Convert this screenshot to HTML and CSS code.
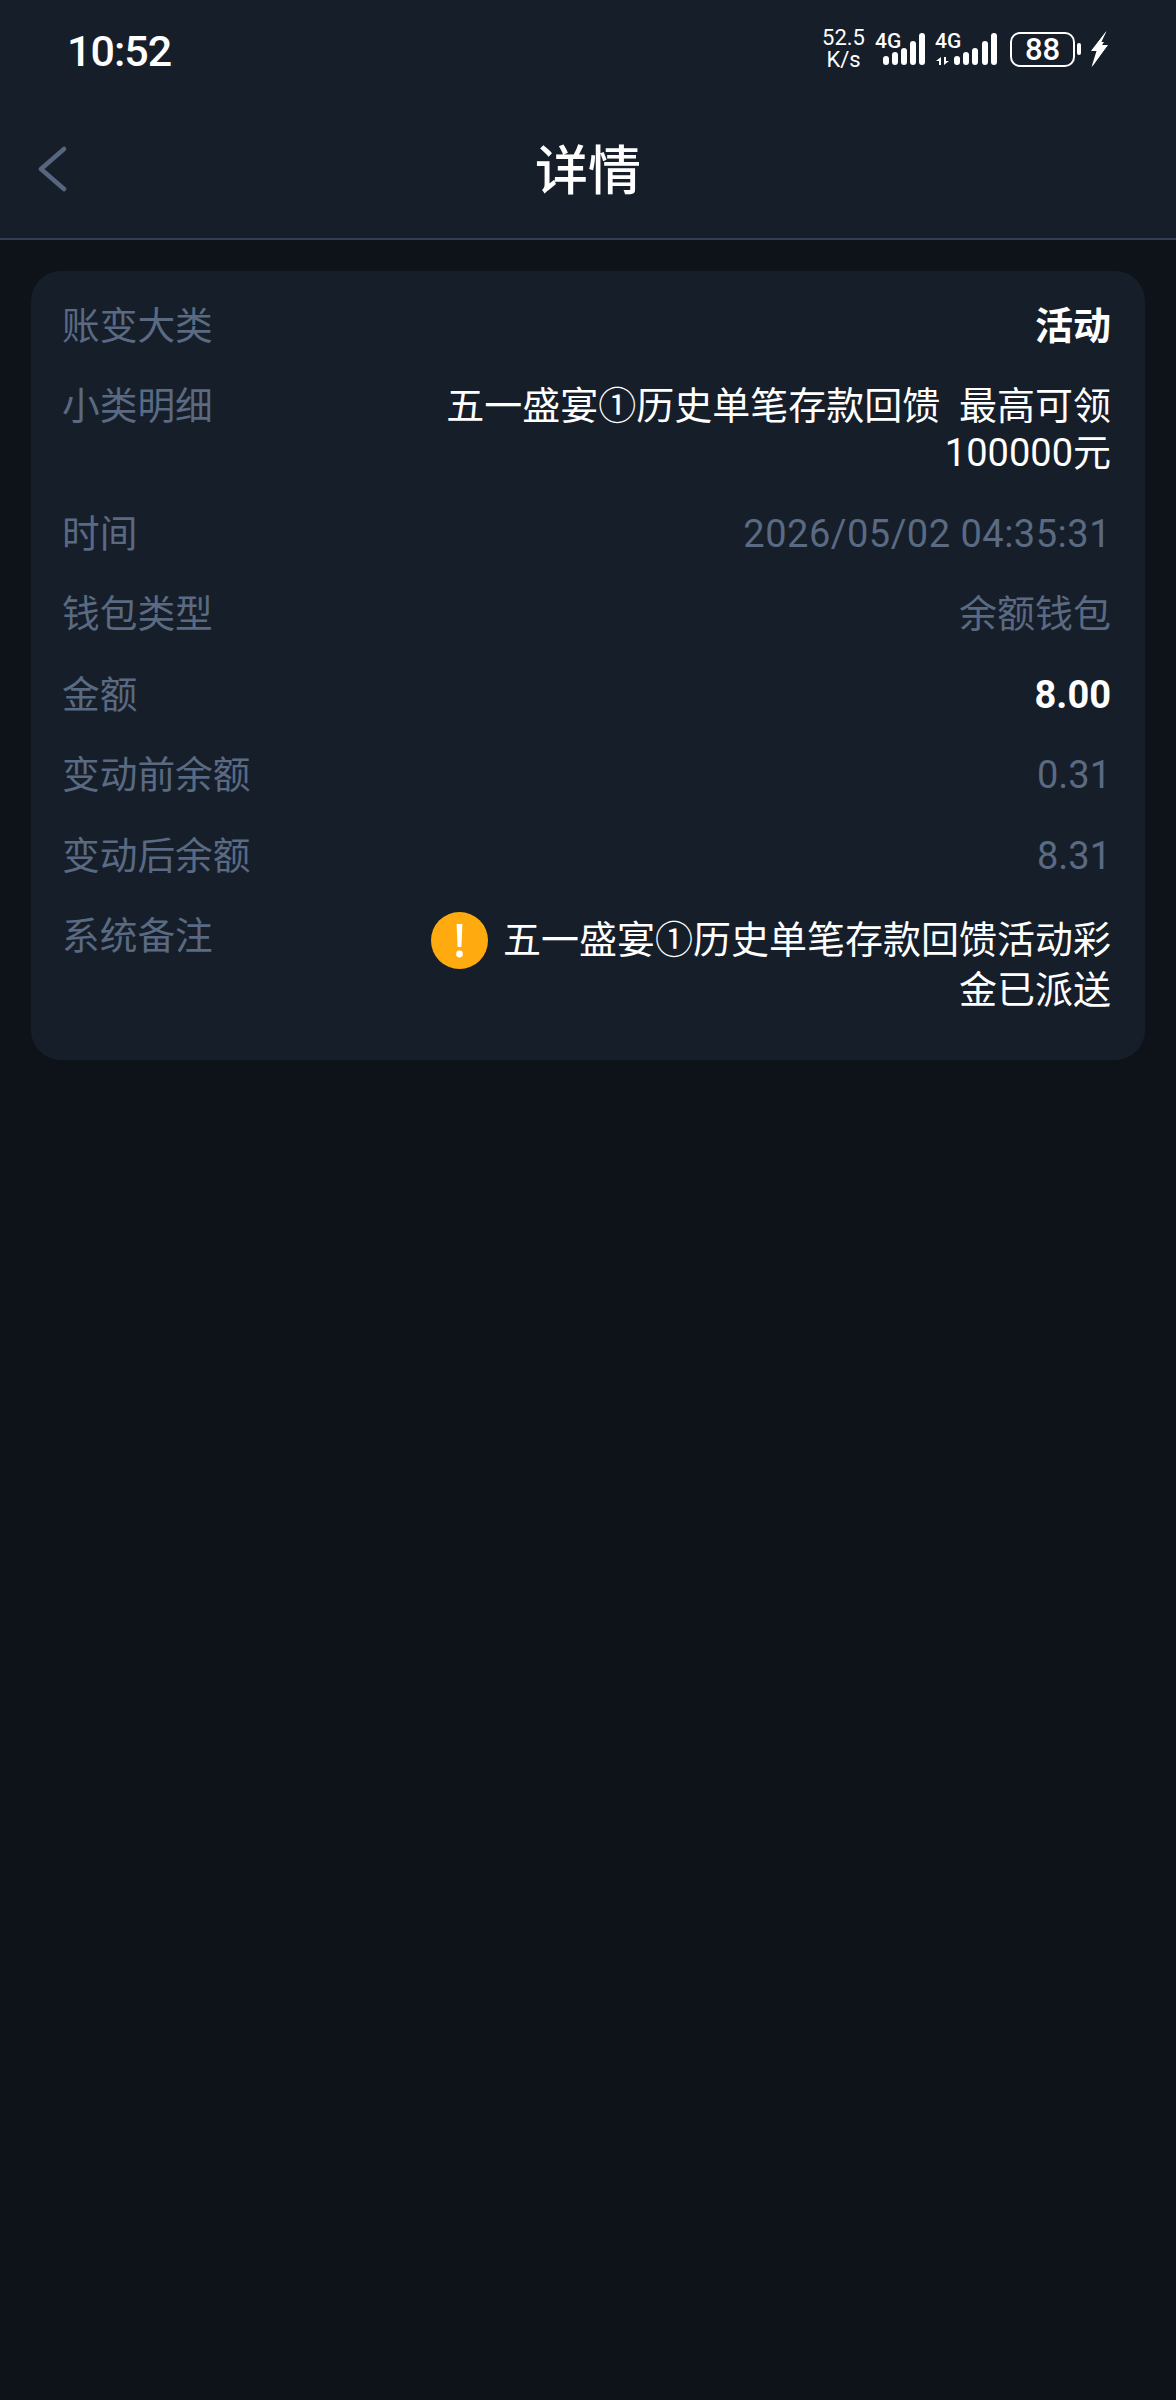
FILE: index.html
```html
<!DOCTYPE html>
<html>
<head>
	<title>详情</title>
	<link rel="stylesheet" href="styles.css">
</head>
<body>
	<header class="header">
		<div class="status-bar">
			<span class="clock">10:52</span>
			<div class="status-icons">
				<div class="net-speed">52.5<br>K/s</div>
				<svg class="signal" width="50" height="38" viewBox="0 -3 50 38">
					<text class="signal-text" x="0" y="15">4G</text>
					<rect x="8" y="23" width="6" height="9" rx="3"/>
					<rect x="17" y="19" width="6" height="13" rx="3"/>
					<rect x="26" y="15" width="6" height="17" rx="3"/>
					<rect x="35" y="8" width="6" height="24" rx="3"/>
					<rect x="44" y="0" width="6" height="32" rx="3"/>
				</svg>
				<svg class="signal" width="62" height="38" viewBox="0 -3 62 38">
					<text class="signal-text" x="0" y="15">4G</text>
					<path d="M6 24v8H4v-4H1zM9 24h2v4h3l-5 4z"/>
					<rect x="19" y="23" width="6" height="9" rx="3"/>
					<rect x="28" y="19" width="6" height="13" rx="3"/>
					<rect x="37" y="15" width="6" height="17" rx="3"/>
					<rect x="47" y="8" width="6" height="24" rx="3"/>
					<rect x="56" y="0" width="6" height="32" rx="3"/>
				</svg>
				<div class="battery">
					<div class="battery-body">88</div>
					<div class="battery-nub"></div>
				</div>
				<svg class="bolt" width="17" height="36" viewBox="0 0 17 36">
					<path d="M15.5 0 0 20h5.5L.5 36 17 14h-6L13 11H9.5z"/>
					<path d="M15.5 0 1 19h7L1 36 16.5 14H9z"/>
				</svg>
			</div>
		</div>
		<div class="nav">
			<svg class="back" width="30" height="46" viewBox="0 0 30 46">
				<path d="M26 3 3 23l23 20"/>
			</svg>
			<h1>详情</h1>
		</div>
	</header>

	<div class="card">
		<div class="row">
			<div class="label">账变大类</div>
			<div class="value bold">活动</div>
		</div>
		<div class="row">
			<div class="label">小类明细</div>
			<div class="value light">五一盛宴①历史单笔存款回馈&nbsp; 最高可领 100000元</div>
		</div>
		<div class="row">
			<div class="label">时间</div>
			<div class="value time">2026/05/02 04:35:31</div>
		</div>
		<div class="row">
			<div class="label">钱包类型</div>
			<div class="value">余额钱包</div>
		</div>
		<div class="row">
			<div class="label">金额</div>
			<div class="value bold">8.00</div>
		</div>
		<div class="row">
			<div class="label">变动前余额</div>
			<div class="value">0.31</div>
		</div>
		<div class="row">
			<div class="label">变动后余额</div>
			<div class="value">8.31</div>
		</div>
		<div class="row">
			<div class="label">系统备注</div>
			<div class="value light note">
				<svg class="warn" width="57" height="57" viewBox="0 0 57 57">
					<circle cx="28.5" cy="28.5" r="28.5" fill="#ffab0f"/>
					<path d="M25.6 12h5.8l-1 23h-3.8z" fill="#fff"/>
					<circle cx="28.5" cy="42" r="3.4" fill="#fff"/>
				</svg>五一盛宴①历史单笔存款回馈活动彩金已派送
			</div>
		</div>
	</div>
</body>
</html>
```

FILE: styles.css
```css
body {
	margin: 0;
	min-height: 2400px;
	background-color: #0e131a;
	font-family: Roboto, "Noto Sans CJK SC", sans-serif;
	color: white;
}
.header {
	background-color: #161e2a;
	border-bottom: 2px solid #323e51;
}
.status-bar {
	display: flex;
	justify-content: space-between;
	height: 100px;
	padding: 0 68px 0 67px;
	box-sizing: border-box;
}
.clock {
	font-size: 43px;
	font-weight: 500;
	letter-spacing: -1px;
	line-height: 102px;
}
.status-icons {
	display: flex;
	align-items: center;
	gap: 10px;
	padding-bottom: 2px;
}
.net-speed {
	font-size: 22px;
	line-height: 22px;
	text-align: center;
}
.signal {
	fill: white;
}
.signal-text {
	font-family: Roboto, sans-serif;
	font-size: 21px;
	font-weight: 500;
}
.battery {
	display: flex;
	align-items: center;
	gap: 2px;
	margin-left: 3px;
}
.battery-body {
	width: 65px;
	height: 35px;
	box-sizing: border-box;
	border: 2px solid white;
	border-radius: 10px;
	font-size: 31px;
	font-weight: 500;
	line-height: 31px;
	text-align: center;
}
.battery-nub {
	width: 4px;
	height: 12px;
	border-radius: 2px;
	background-color: white;
}
.bolt {
	fill: white;
}
.nav {
	display: flex;
	align-items: center;
	position: relative;
	justify-content: center;
	height: 138px;
}
.back {
	position: absolute;
	left: 38px;
	fill: none;
	stroke: #56667f;
	stroke-width: 4.5;
	stroke-linecap: round;
	stroke-linejoin: round;
}
h1 {
	margin: 0 0 5px;
	font-size: 53px;
	font-weight: 500;
}
.card {
	margin: 31px 31px 0;
	padding: 31.5px 34px 12px 31px;
	background-color: #161e2a;
	border-radius: 30px;
}
.row {
	display: flex;
	justify-content: space-between;
	margin-bottom: 33.5px;
	font-size: 37.7px;
	line-height: 47px;
}
.label {
	color: #5a6a82;
	white-space: nowrap;
}
.value {
	max-width: 690px;
	font-size: 38px;
	text-align: right;
	color: #5a6a82;
}
.value.time {
	letter-spacing: 0.5px;
}
.value.light {
	color: white;
}
.value.bold {
	color: white;
	font-weight: 700;
}
.value.note {
	margin-top: 4px;
}
.warn {
	margin: -6px 15px -2px 0;
	vertical-align: middle;
}
```
